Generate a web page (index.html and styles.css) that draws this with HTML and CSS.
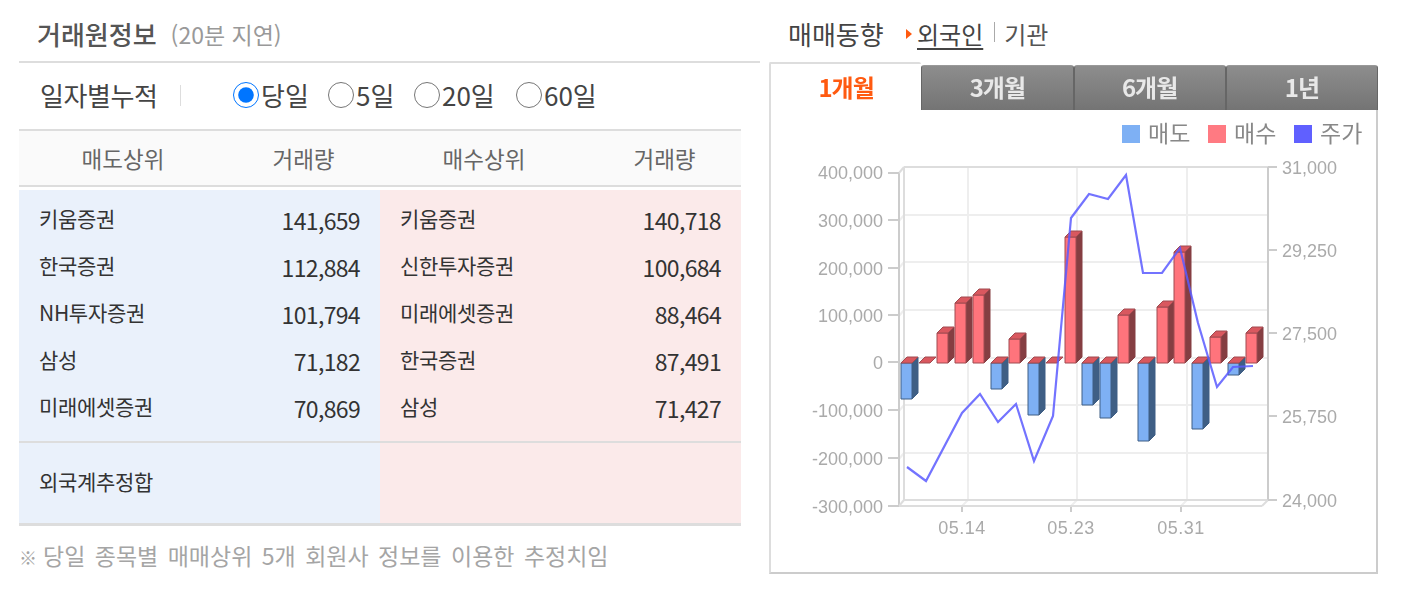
FILE: index.html
```html
<!DOCTYPE html>
<html lang="ko">
  <head>
    <title>거래원정보</title>
    <meta charset="utf-8" />
    <link rel="stylesheet" href="styles.css">
  </head>
  <body>
    <div class="page">
      <div class="left">
        <div class="title-row">
          <span class="title">거래원정보</span>
          <span class="delay">(20분 지연)</span>
        </div>
        <div class="period-row">
          <span class="period-label">일자별누적</span>
          <span class="period-sep"></span>
          <div class="radios">
            <label class="radio r1"><input type="radio" name="period" checked>당일</label>
            <label class="radio r2"><input type="radio" name="period">5일</label>
            <label class="radio r3"><input type="radio" name="period">20일</label>
            <label class="radio r4"><input type="radio" name="period">60일</label>
          </div>
        </div>
        <div class="table">
          <div class="thead">
            <span>매도상위</span><span>거래량</span><span>매수상위</span><span>거래량</span>
          </div>
          <div class="tbody">
            <div class="side sell">
              <div class="row"><span class="name">키움증권</span><span class="num">141,659</span></div>
              <div class="row"><span class="name">한국증권</span><span class="num">112,884</span></div>
              <div class="row"><span class="name">NH투자증권</span><span class="num">101,794</span></div>
              <div class="row"><span class="name">삼성</span><span class="num">71,182</span></div>
              <div class="row"><span class="name">미래에셋증권</span><span class="num">70,869</span></div>
            </div>
            <div class="side buy">
              <div class="row"><span class="name">키움증권</span><span class="num">140,718</span></div>
              <div class="row"><span class="name">신한투자증권</span><span class="num">100,684</span></div>
              <div class="row"><span class="name">미래에셋증권</span><span class="num">88,464</span></div>
              <div class="row"><span class="name">한국증권</span><span class="num">87,491</span></div>
              <div class="row"><span class="name">삼성</span><span class="num">71,427</span></div>
            </div>
          </div>
          <div class="tfoot">
            <div class="foot-cell sell"><span class="name">외국계추정합</span></div>
            <div class="foot-cell buy"></div>
          </div>
        </div>
        <div class="note"><span class="mark">※</span>당일 종목별 매매상위 5개 회원사 정보를 이용한 추정치임</div>
      </div>

      <div class="right">
        <div class="trend-row">
          <span class="trend-title">매매동향</span>
          <span class="arrow"></span>
          <a class="trend-on">외국인</a>
          <span class="trend-sep"></span>
          <a class="trend-off">기관</a>
        </div>
        <div class="tabs">
          <div class="tab on">1개월</div>
          <div class="tab">3개월</div>
          <div class="tab">6개월</div>
          <div class="tab">1년</div>
        </div>
        <div class="chart-box">
          <svg id="chart" class="chart" width="609" height="462" viewBox="769 110 609 462">
            <g class="legend-text">
              <rect x="1122" y="125" width="18" height="18" fill="#7eb0f4" />
              <text x="1148" y="142">매도</text>
              <rect x="1208" y="125" width="18" height="18" fill="#ff7a82" />
              <text x="1234" y="142">매수</text>
              <rect x="1294" y="125" width="18" height="18" fill="#6060ff" />
              <text x="1320" y="142">주가</text>
            </g>
            <g id="grid"></g>
            <g class="axis-text left-labels">
              <text x="883" y="179">400,000</text>
              <text x="883" y="227">300,000</text>
              <text x="883" y="275">200,000</text>
              <text x="883" y="322">100,000</text>
              <text x="883" y="369">0</text>
              <text x="883" y="417">-100,000</text>
              <text x="883" y="465">-200,000</text>
              <text x="883" y="513">-300,000</text>
            </g>
            <g class="axis-text">
              <text x="1282" y="174">31,000</text>
              <text x="1282" y="257">29,250</text>
              <text x="1282" y="340">27,500</text>
              <text x="1282" y="423">25,750</text>
              <text x="1282" y="507">24,000</text>
            </g>
            <g class="axis-text mid-labels">
              <text x="962" y="534">05.14</text>
              <text x="1071" y="534">05.23</text>
              <text x="1181" y="534">05.31</text>
            </g>
            <g id="bars"></g>
            <polyline class="price" points="907,467 926,481 962,413 980,394 998,422 1016,404 1034,461 1053,416 1071,218 1089,194 1108,199 1126,175 1143,273 1162,273 1180,248 1198,323 1217,387 1233,367 1253,366" />
          </svg>
        </div>
      </div>
    </div>
    <script src="chart.js"></script>
  </body>
</html>
```

FILE: chart.js
```js
// value = pixel end of the bar, 363 is the zero line
var sell = [[901, 399], [991, 389], [1028, 415], [1082, 405], [1100, 418], [1138, 441], [1192, 429], [1228, 375]];
var buy = [[901, 363], [919, 363], [937, 333], [955, 303], [973, 295], [991, 363], [1009, 339], [1028, 363],
           [1046, 363], [1065, 237], [1082, 363], [1100, 363], [1118, 315], [1138, 363], [1157, 307], [1174, 252],
           [1192, 363], [1210, 337], [1228, 363], [1246, 333]];
var W = 11, D = 6, ZERO = 363;

function poly(pts, fill, stroke) {
    return '<polygon points="' + pts + '" fill="' + fill + '" stroke="' + stroke + '" />'; }

function line(x1, y1, x2, y2, cls) {
    return '<line x1="' + x1 + '" y1="' + y1 + '" x2="' + x2 + '" y2="' + y2 + '" class="' + cls + '" />'; }

var g = "";
// back wall
[215, 262, 310, 358, 405, 453].forEach(function (y) {
    g += line(904, y, 1268, y, "soft");
    g += line(899, y + 6, 904, y, "soft"); });
[968, 1077, 1187].forEach(function (x) {
    g += line(x, 167, x, 500, "soft");
    g += line(x - 6, 506, x, 500, "soft");
    g += line(x - 6, 506, x - 6, 512, "axis"); });
g += line(904, 167, 1268, 167, "wall");
g += line(904, 167, 904, 500, "wall");
g += line(904, 500, 1268, 500, "wall");
g += line(1268, 167, 1268, 500, "axis");
// left and floor
g += line(899, 173, 899, 506, "axis");
g += line(899, 173, 904, 167, "wall");
g += line(899, 506, 904, 500, "wall");
g += line(899, 506, 1262, 506, "wall");
g += line(1262, 506, 1268, 500, "wall");
[173, 220, 268, 315, 362, 410, 458, 506].forEach(function (y) {
    g += line(888, y, 899, y, "axis"); });
[167, 250, 333, 416, 500].forEach(function (y) {
    g += line(1268, y, 1277, y, "axis"); });
document.getElementById("grid").innerHTML = g;

var b = "";
sell.forEach(function (s) {
    var x = s[0], y = s[1];
    b += poly((x + W) + "," + ZERO + " " + (x + W + D) + "," + (ZERO - D) + " " + (x + W + D) + "," + (y - D) + " " + (x + W) + "," + y, "#3f5f85", "#3f5f85");
    b += poly(x + "," + ZERO + " " + (x + W) + "," + ZERO + " " + (x + W) + "," + y + " " + x + "," + y, "#7eb0f4", "#3f5f85"); });
buy.forEach(function (s) {
    var x = s[0], y = s[1];
    if (y < ZERO) {
        b += poly((x + W) + "," + y + " " + (x + W + D) + "," + (y - D) + " " + (x + W + D) + "," + (ZERO - D) + " " + (x + W) + "," + ZERO, "#853e42", "#853e42");
        b += poly(x + "," + y + " " + (x + W) + "," + y + " " + (x + W) + "," + ZERO + " " + x + "," + ZERO, "#ff747c", "#a04a50"); }
    b += poly(x + "," + y + " " + (x + D) + "," + (y - D) + " " + (x + W + D) + "," + (y - D) + " " + (x + W) + "," + y, "#d9585f", "#a04a50"); });
document.getElementById("bars").innerHTML = b;
```

FILE: styles.css
```css
html, body {
    margin: 0;
    padding: 0;
    background: #fff; }

body {
    font-family: "Noto Sans CJK KR", "Noto Sans", sans-serif; }

.page {
    display: flex;
    width: 1412px;
    height: 596px;
    padding-left: 19px;
    box-sizing: border-box; }

.left {
    width: 741px;
    flex: none; }

.right {
    width: 609px;
    margin-left: 9px;
    flex: none; }

/* left side */
.title-row {
    height: 61px;
    display: flex;
    align-items: center;
    padding: 7px 0 0 18px;
    box-sizing: border-box; }

.title {
    font-size: 26px;
    font-weight: 500;
    color: #555;
    line-height: 1; }

.delay {
    font-size: 23px;
    color: #999;
    margin-left: 14px;
    line-height: 1; }

.period-row {
    height: 68px;
    border-top: 2px solid #ddd;
    box-sizing: border-box;
    display: flex;
    align-items: center;
    padding: 0 0 2px 21px; }

.period-label {
    font-size: 26px;
    color: #444;
    width: 140px;
    line-height: 1;
    letter-spacing: -0.4px; }

.period-sep {
    width: 1px;
    height: 21px;
    background: #ddd; }

.radios {
    display: flex;
    margin-left: 52px; }

.radio {
    display: flex;
    align-items: center;
    font-size: 26px;
    color: #444;
    line-height: 1; }

.radio input {
    width: 26px;
    height: 26px;
    margin: 0 2px 0 0; }

.r1 { width: 95px; }
.r2 { width: 86px; }
.r3 { width: 102px; }

.table {
    width: 722px;
    border-top: 2px solid #ddd;
    border-bottom: 3px solid #ddd; }

.thead {
    display: grid;
    grid-template-columns: 208px 153px 208px 153px;
    height: 54px;
    align-items: center;
    text-align: center;
    background: #fafafa;
    border-bottom: 2px solid #ddd;
    margin-bottom: 3px;
    font-size: 22.5px;
    color: #666; }

.thead span {
    line-height: 1; }

.tbody {
    display: flex;
    height: 251px; }

.side {
    width: 361px;
    padding-top: 7px;
    box-sizing: border-box; }

.sell { background: #eaf1fb; }
.buy { background: #fbeaea; }

.row {
    height: 47px;
    display: flex;
    justify-content: space-between;
    align-items: center;
    padding: 0 20px; }

.name {
    font-size: 21px;
    color: #333;
    line-height: 1;
    margin-top: -4px;
    letter-spacing: -0.3px; }

.num {
    font-size: 23px;
    color: #333;
    line-height: 1;
    letter-spacing: -0.65px; }

.tfoot {
    display: flex;
    border-top: 2px solid #ddd;
    height: 80px; }

.foot-cell {
    width: 361px;
    display: flex;
    align-items: center;
    padding-left: 20px;
    box-sizing: border-box; }

.note {
    margin-top: 13px;
    font-size: 23px;
    word-spacing: 3px;
    color: #a5a5a5;
    line-height: 32px;
    white-space: nowrap; }

.mark {
    font-size: 18px;
    margin-right: 6px; }

/* right side */
.trend-row {
    height: 62px;
    display: flex;
    align-items: center;
    padding: 6px 0 0 19px;
    box-sizing: border-box; }

.trend-title {
    font-size: 26px;
    color: #444;
    width: 118px;
    line-height: 1; }

.arrow {
    width: 0;
    height: 0;
    border-left: 6px solid #ff5a10;
    border-top: 5px solid transparent;
    border-bottom: 5px solid transparent;
    margin-right: 5px; }

.trend-on {
    font-size: 24px;
    color: #444;
    text-decoration: underline;
    text-underline-offset: 4px;
    line-height: 1; }

.trend-sep {
    width: 1px;
    height: 20px;
    background: #aaa;
    margin: 0 10px 4px 11px; }

.trend-off {
    font-size: 24px;
    color: #555;
    line-height: 1;
    margin-left: -1px; }

.tabs {
    display: flex;
    height: 48px; }

.tab {
    flex: 1;
    margin-top: 3px;
    background: linear-gradient(#8d8d8d, #747474);
    border: 1px solid #666;
    border-top-color: #999;
    border-bottom: none;
    border-radius: 3px 3px 0 0;
    color: #e8e8e8;
    font-size: 24px;
    font-weight: 700;
    text-align: center;
    line-height: 41px;
    letter-spacing: -1px;
    filter: blur(0.4px); }

.tab.on {
    margin-top: 0;
    background: #fff;
    border: 2px solid #ddd;
    border-bottom: none;
    border-right: none;
    border-radius: 2px 2px 0 0;
    color: #ff5a10;
    line-height: 45px;
    letter-spacing: -1px; }

.chart-box {
    height: 464px;
    border-left: 2px solid #ddd;
    border-right: 2px solid #ccc;
    border-bottom: 2px solid #ccc;
    box-sizing: border-box; }

.chart {
    display: block;
    margin-left: -2px;
    filter: blur(0.6px); }

.legend-text text {
    font-size: 23px;
    fill: #888; }

.axis-text text {
    font-family: "Liberation Sans", sans-serif;
    font-size: 18px;
    fill: #aaa; }

.left-labels text { text-anchor: end; }
.mid-labels text { text-anchor: middle; letter-spacing: 0.5px; }

.soft { stroke: #eee; stroke-width: 2; }
.wall { stroke: #ddd; stroke-width: 2; }
.axis { stroke: #ccc; stroke-width: 2; }

.price {
    fill: none;
    stroke: #5a5aff;
    stroke-width: 2.2;
    stroke-opacity: 0.85; }
```
